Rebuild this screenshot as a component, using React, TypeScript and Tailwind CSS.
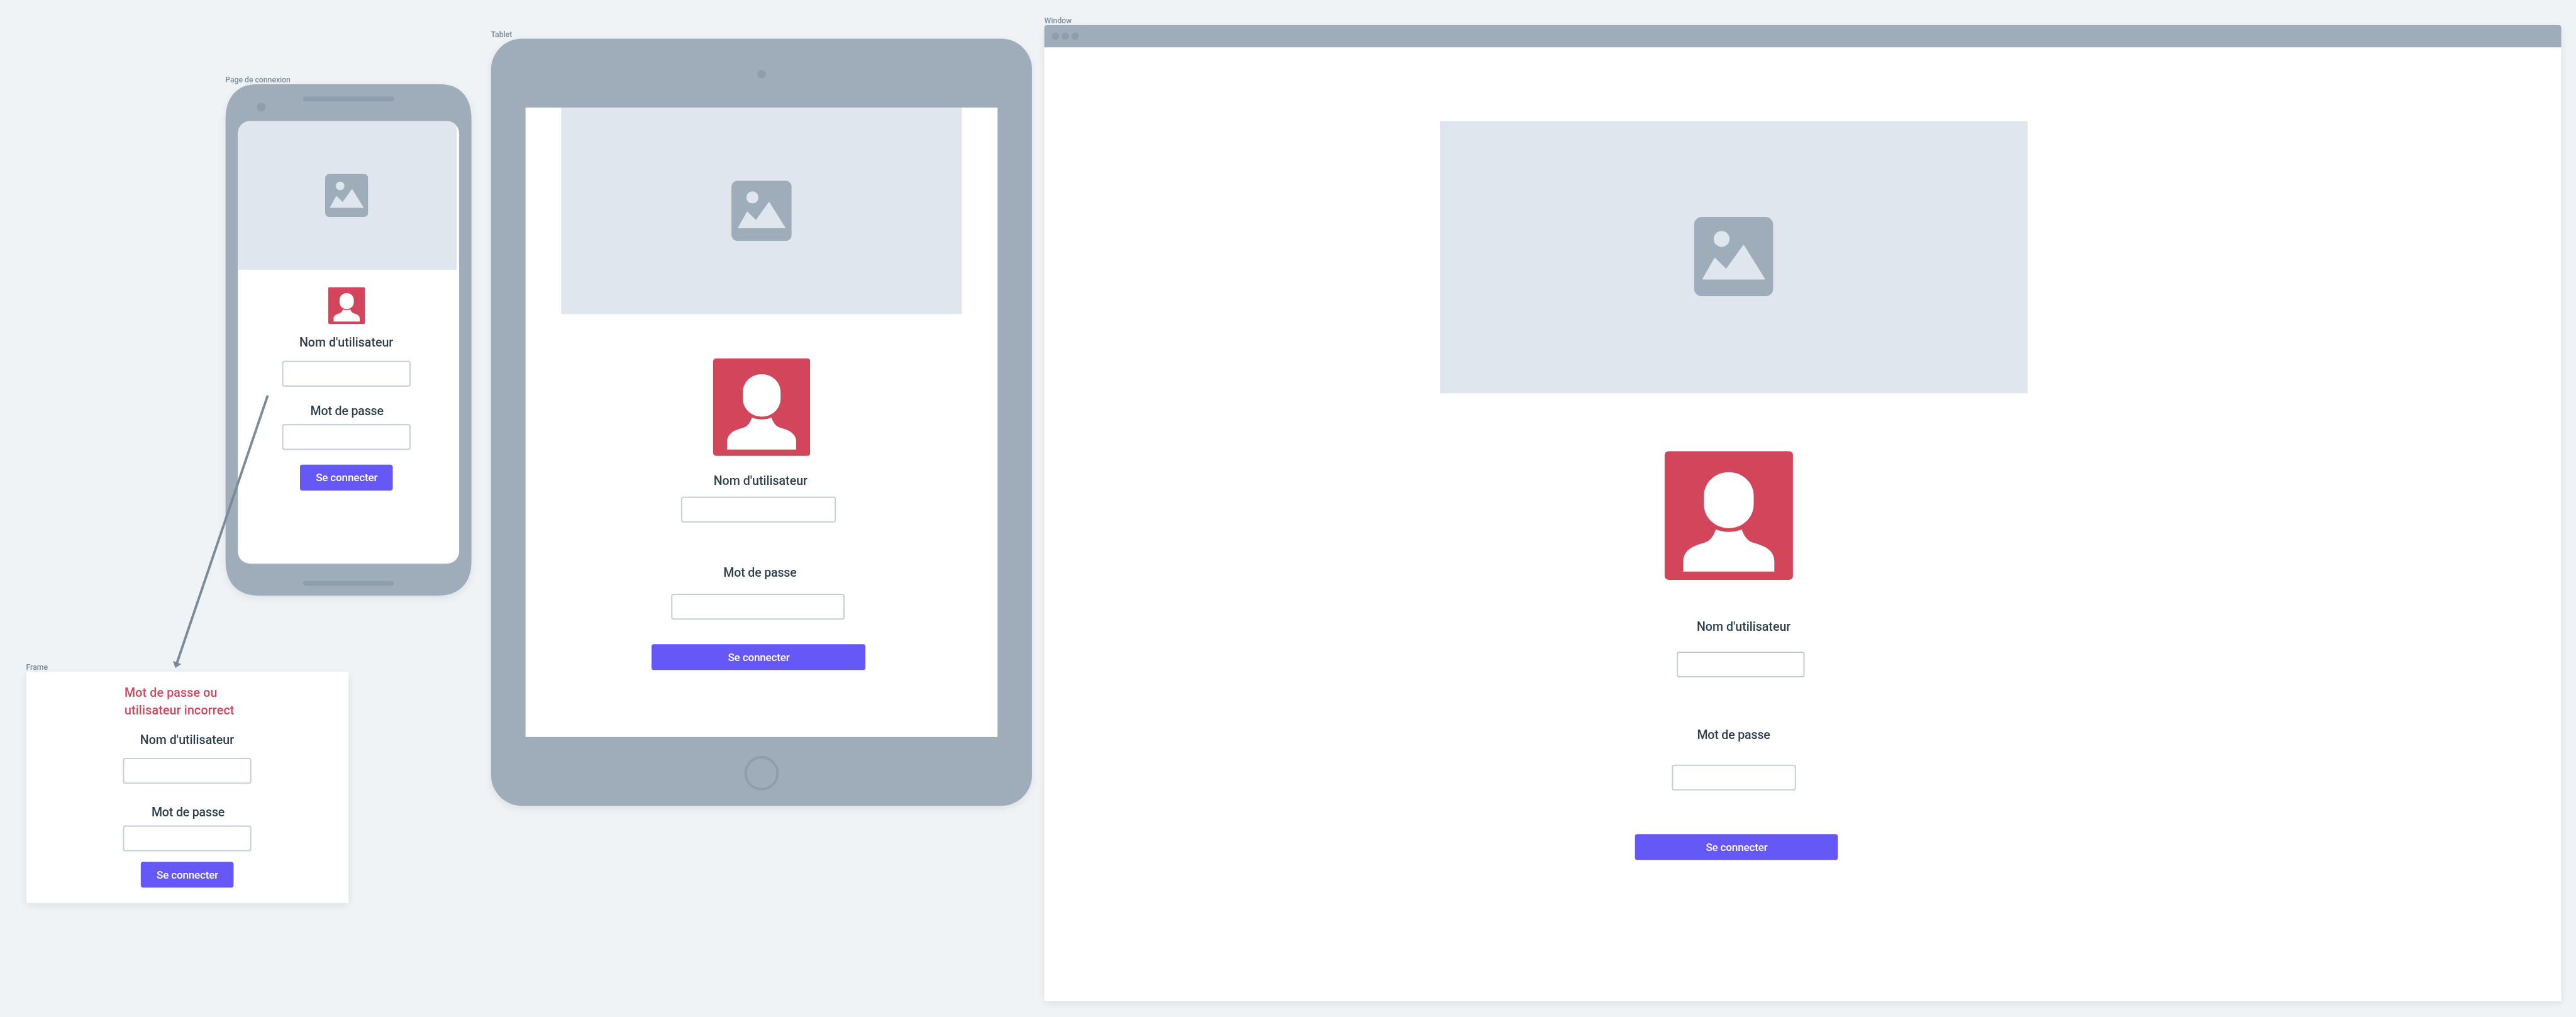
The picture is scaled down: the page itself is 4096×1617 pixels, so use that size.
import React from "react";

function Caption({ className, children }: { className: string; children: React.ReactNode }) {
  return (
    <span className={"absolute whitespace-nowrap text-[12.5px] leading-[16px] font-medium text-[#7a8b99] " + className}>
      {children}
    </span>
  );
}

function ImageHolder({ className, icon }: { className: string; icon: string }) {
  return (
    <div className={"flex shrink-0 items-center justify-center bg-[#dfe6ee] " + className}>
      <svg viewBox="0 0 70 70" className={icon}>
        <rect width="70" height="70" rx="7" fill="#9eadb9" />
        <circle cx="24.4" cy="19.4" r="7" fill="#dfe6ee" />
        <path
          d="M8.2 54.6 L18.4 36.6 L28.5 46.6 L43.8 25.4 L62 54.6 Z"
          fill="#dfe6ee"
          stroke="#dfe6ee"
          strokeWidth="1.2"
          strokeLinejoin="round"
        />
      </svg>
    </div>
  );
}

function Avatar({ className }: { className: string }) {
  return (
    <svg viewBox="0 0 209 209" className={"block shrink-0 " + className}>
      <rect width="209" height="209" rx="7" fill="#d3455b" />
      <path
        fill="#fff"
        d="M104.5 34 C127 34 145 51 145 73 V86 C145 108 127 125 104.5 125 C82 125 64 108 64 86 V73 C64 51 82 34 104.5 34 Z"
      />
      <path
        fill="#fff"
        d="M83.4 127 Q104.5 135.2 125.6 127 C128.5 136 134 146 145 149 C160 153 178.500 159.500 178.500 179 V195.500 H30.500 V179 C30.500 159.500 49 153 64 149 C75 146 80.500 136 83.400 127 Z"
      />
    </svg>
  );
}

function Label({ className, children }: { className: string; children: React.ReactNode }) {
  return (
    <div className={"shrink-0 whitespace-nowrap text-[20px] leading-[28px] font-medium " + className}>{children}</div>
  );
}

function Field({ className }: { className: string }) {
  return <div className={"h-[42px] shrink-0 rounded-[4px] border-2 border-[#c4cdd8] bg-white " + className} />;
}

function Submit({ className }: { className: string }) {
  return (
    <button
      className={
        "flex h-[42px] shrink-0 items-center justify-center rounded-[4px] bg-[#6658f6] pl-px text-[17.5px] font-medium tracking-[-0.2px] text-white " +
        className
      }
    >
      Se connecter
    </button>
  );
}

const user = "Nom d'utilisateur";
const pass = "Mot de passe";
const userInk = "tracking-[0.03px] text-[#2f3e4c]";
const passInk = "tracking-[-0.15px] text-[#2f3e4c]";

function Phone() {
  return (
    <div className="absolute top-[137px] left-[367px] h-[832px] w-[400px]">
      <svg
        viewBox="0 0 400 832"
        className="absolute inset-0 h-full w-full overflow-visible drop-shadow-[0_4px_6px_rgba(0,0,0,0.07)]"
      >
        <path
          fill="#9eadb9"
          d="M0 56 C0 20 20 0 50 0 H350 C380 0 400 20 400 56 V776 C400 812 380 832 346 832 H54 C20 832 0 812 0 776 Z"
        />
        <rect x="126" y="20" width="148" height="8" rx="4" fill="#8e9eac" />
        <circle cx="58" cy="37" r="7" fill="#8e9eac" />
        <rect x="126" y="808" width="148" height="8" rx="4" fill="#8e9eac" />
      </svg>
      <div className="relative mx-auto flex h-full w-[360px] flex-col pt-[60px] pb-[52px]">
        <div className="flex h-[720px] flex-col items-start overflow-hidden rounded-[20px] bg-white">
          <ImageHolder className="h-[241.6px] w-[355.7px] pr-[1.7px]" icon="h-[70px] w-[70px]" />
          <Avatar className="mt-[28.4px] ml-[147.4px] h-[60px] w-[60px]" />
          <Label className={"mt-[16px] ml-[100px] " + userInk}>{user}</Label>
          <Field className="mt-[16px] ml-[72px] w-[209px]" />
          <Label className={"mt-[25px] ml-[118px] " + passInk}>{pass}</Label>
          <Field className="mt-[8px] ml-[72px] w-[209px]" />
          <Submit className="mt-[24px] ml-[101px] w-[151px]" />
        </div>
      </div>
    </div>
  );
}

function Frame() {
  return (
    <div className="absolute top-[1093px] left-[43px] flex h-[376px] w-[524px] flex-col items-start bg-white shadow-[0_4px_12px_rgba(0,0,0,0.07)]">
      <Label className="mt-[20px] ml-[159.5px] tracking-[0.2px] text-[#d3455b]">
        Mot de passe ou
        <br />
        utilisateur incorrect
      </Label>
      <Label className={"mt-[20px] ml-[185px] " + userInk}>{user}</Label>
      <Field className="mt-[16px] ml-[157px] w-[209px]" />
      <Label className={"mt-[32px] ml-[203.5px] " + passInk}>{pass}</Label>
      <Field className="mt-[8px] ml-[157px] w-[209px]" />
      <Submit className="mt-[17px] ml-[186px] w-[151px]" />
    </div>
  );
}

function Tablet() {
  return (
    <div className="absolute top-[63px] left-[799px] flex h-[1248px] w-[880px] flex-col items-center rounded-[50px] bg-[#9eadb9] shadow-[0_4px_12px_rgba(0,0,0,0.07)]">
      <div className="flex h-[112px] shrink-0 items-center pt-[4px]">
        <div className="h-[14px] w-[14px] rounded-full bg-[#8e9eac]" />
      </div>
      <div className="flex h-[1024px] w-[768px] shrink-0 flex-col items-start bg-white">
        <ImageHolder className="ml-[58px] h-[336px] w-[652px]" icon="h-[98px] w-[98px]" />
        <Avatar className="mt-[72px] ml-[304.7px] h-[158.5px] w-[158.5px]" />
        <Label className={"mt-[26.5px] ml-[306px] " + userInk}>{user}</Label>
        <Field className="mt-[12px] ml-[253px] w-[252px]" />
        <Label className={"mt-[67px] ml-[322px] " + passInk}>{pass}</Label>
        <Field className="mt-[21px] ml-[237px] w-[282px]" />
        <Submit className="mt-[40px] ml-[205px] w-[348px]" />
      </div>
      <div className="mt-[31px] h-[56px] w-[56px] shrink-0 rounded-full border-4 border-[#8e9eac]" />
    </div>
  );
}

function DesktopWindow() {
  return (
    <div className="absolute top-[41px] left-[1699px] flex h-[1588px] w-[2468px] flex-col rounded-t-[4px] bg-white shadow-[0_4px_12px_rgba(0,0,0,0.07)]">
      <div className="flex h-[36px] shrink-0 items-center gap-1 rounded-t-[4px] bg-[#9eadb9] px-3">
        <div className="h-3 w-3 rounded-full bg-[#8e9eac]" />
        <div className="h-3 w-3 rounded-full bg-[#8e9eac]" />
        <div className="h-3 w-3 rounded-full bg-[#8e9eac]" />
      </div>
      <div className="flex flex-1 flex-col items-start">
        <ImageHolder className="mt-[120px] ml-[644px] h-[442.6px] w-[956px] pr-px pb-[2px]" icon="h-[129px] w-[129px]" />
        <Avatar className="mt-[94.8px] ml-[1008.8px] h-[209.3px] w-[209.3px]" />
        <Label className={"mt-[61.8px] ml-[1061.5px] " + userInk}>{user}</Label>
        <Field className="mt-[26.5px] ml-[1029px] w-[208px]" />
        <Label className={"mt-[79.2px] ml-[1062px] " + passInk}>{pass}</Label>
        <Field className="mt-[34.8px] ml-[1021px] w-[202px]" />
        <Submit className="mt-[71px] ml-[961px] w-[330px]" />
      </div>
    </div>
  );
}

export default function App() {
  return (
    <div className="h-[1617px] w-[4096px] overflow-hidden bg-[#eff3f6] font-['Roboto',sans-serif]">
      <div className="relative h-[1654px] w-[4191px] origin-top-left scale-[0.97733]">
        <Caption className="top-[121.500px] left-[366.500px]">Page de connexion</Caption>
        <Caption className="top-[1078px] left-[42.500px]">Frame</Caption>
        <Caption className="top-[48px] left-[798.500px]">Tablet</Caption>
        <Caption className="top-[26px] left-[1699px]">Window</Caption>
        <Phone />
        <Frame />
        <Tablet />
        <DesktopWindow />
        <svg viewBox="0 0 180 460" className="absolute top-[636px] left-[270px] h-[460px] w-[180px]">
          <path d="M165 9 L18 442" stroke="#7a8b99" strokeWidth="4" strokeLinecap="round" />
          <path d="M12 440 L24 444.500 L15.500 450 Z" fill="#7a8b99" stroke="#7a8b99" strokeLinejoin="round" />
        </svg>
      </div>
    </div>
  );
}
